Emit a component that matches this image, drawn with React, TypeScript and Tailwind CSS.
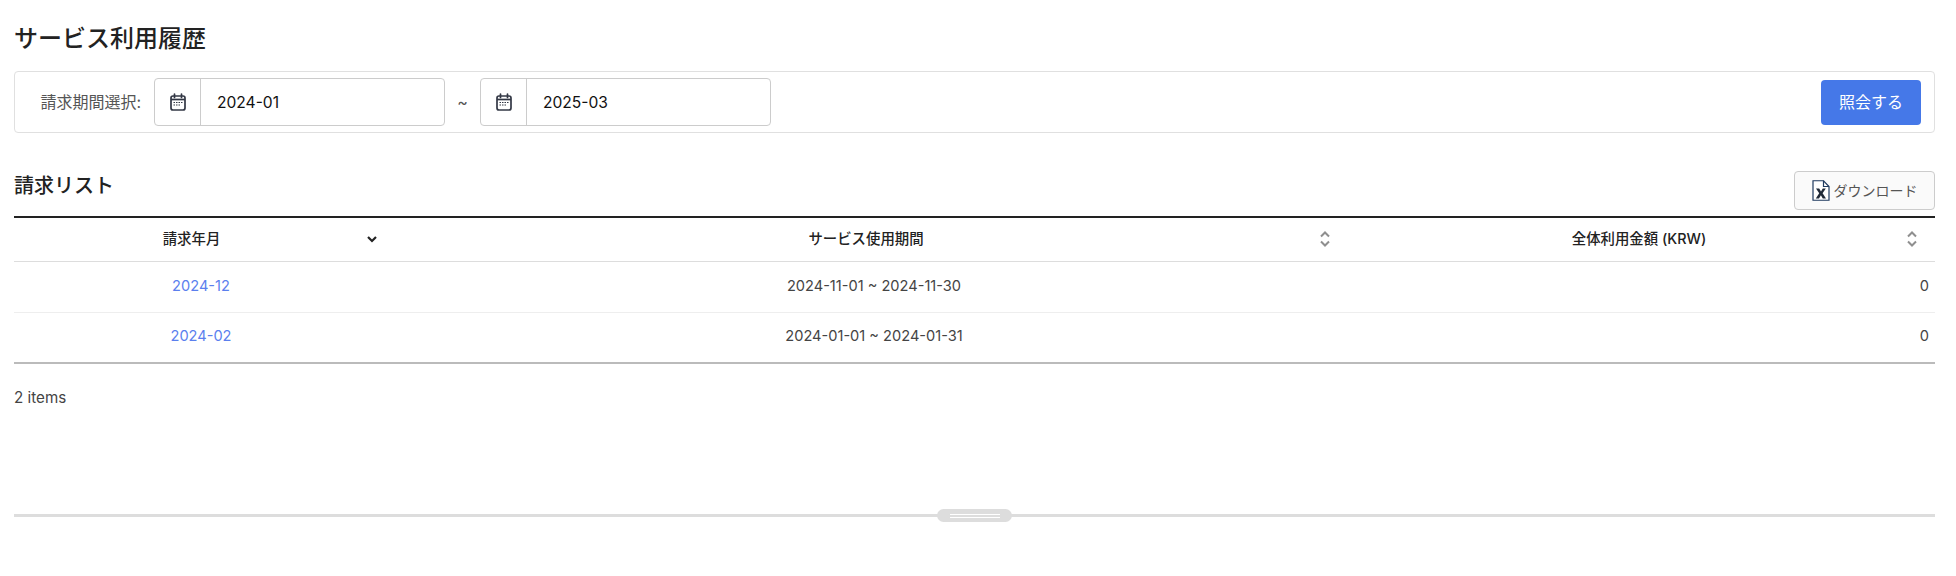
import React from "react";

function CalendarIcon() {
  return (
    <svg width="16" height="18" viewBox="0 0 16 18" fill="none" className="text-[#333845]">
      <rect x="1" y="3" width="14" height="14" rx="2" stroke="currentColor" strokeWidth="1.7" />
      <path d="M1 6.500h14" stroke="currentColor" strokeWidth="1.700" />
      <path d="M4.500 1v3.500M11.500 1v3.500" stroke="currentColor" strokeWidth="1.700" strokeLinecap="round" />
      <path d="M3.500 9.500h1.500M6 9.500h1.500M8.500 9.500h1.500M11 9.500h1.500M3.500 12h1.500M6 12h1.500M8.500 12h1.500" stroke="currentColor" strokeWidth="1.200" />
    </svg>
  );
}

function ExcelIcon() {
  return (
    <svg width="18" height="21" viewBox="0 0 18 21" fill="none">
      <path d="M1 .75h10.500L17 6.500v13.750H1z" fill="#fff" stroke="#1f3a5f" strokeWidth="1.200" />
      <path d="M11.500 .75V6.500H17" stroke="#1f3a5f" strokeWidth="1.200" fill="none" />
      <path d="M4 8.500h3.200l1.800 3 1.800-3h3l-3.200 4.700 3.400 5.300h-3.200l-1.900-3.200-1.900 3.200H3.800l3.400-5.300z" fill="#1f2937" />
    </svg>
  );
}

function SortBoth() {
  return (
    <svg width="12" height="18" viewBox="0 0 12 18" fill="none" stroke="#8f8f8f" strokeWidth="2">
      <path d="M2 6.500L6 2.500l4 4" />
      <path d="M2 11.500l4 4 4-4" />
    </svg>
  );
}

function SortDown() {
  return (
    <svg width="12" height="18" viewBox="0 0 12 18" fill="none" stroke="#222" strokeWidth="2.200">
      <path d="M2 7l4 4 4-4" />
    </svg>
  );
}

function MonthInput({ value }: { value: string }) {
  return (
    <div className="flex h-[48px] w-[291px] rounded-[4px] border border-[#cccccc] bg-white">
      <div className="flex w-[46px] items-center justify-center border-r border-[#cccccc]">
        <CalendarIcon />
      </div>
      <div className="flex flex-1 items-center pt-px pl-[16px] text-[15.6px] text-[#111]">{value}</div>
    </div>
  );
}

const rows = [
  { month: "2024-12", period: "2024-11-01 ~ 2024-11-30", amount: "0" },
  { month: "2024-02", period: "2024-01-01 ~ 2024-01-31", amount: "0" },
];

export default function App() {
  return (
    <div className="h-[576px] w-[1956px] bg-white pr-[21px] pl-[14px] font-['Inter','Noto_Sans_CJK_JP',sans-serif] text-[#222]">
      <h1 className="pt-[21px] text-[24px] leading-[36px] font-medium text-[#222]">サービス利用履歴</h1>

      {/* Search bar */}
      <div className="mt-[14px] flex h-[62px] items-center rounded-[4px] border border-[#e0e0e0] pr-[13px]">
        <span className="w-[139px] pr-[13px] text-right text-[16px] text-[#555]">請求期間選択:</span>
        <MonthInput value="2024-01" />
        <span className="w-[35px] text-center text-[16px] text-[#555]">~</span>
        <MonthInput value="2025-03" />
        <button className="ml-auto h-[45px] w-[100px] rounded-[4px] bg-[#4578e8] text-[16px] text-white">照会する</button>
      </div>

      {/* List header */}
      <div className="mt-[38px] flex h-[39px] items-start justify-between">
        <h2 className="text-[20px] leading-[30px] font-medium text-[#222]">請求リスト</h2>
        <button className="flex h-[39px] w-[141px] items-center justify-center gap-[4px] rounded-[4px] border border-[#cccccc] bg-[#fafafa] text-[14px] text-[#555]">
          <ExcelIcon />
          ダウンロード
        </button>
      </div>

      <table className="mt-[6px] w-full table-fixed border-t-2 border-b-2 border-t-[#222] border-b-[#bbbbbb] text-[14.6px]">
        <colgroup>
          <col className="w-[374px]" />
          <col className="w-[972px]" />
          <col />
        </colgroup>
        <thead>
          <tr className="h-[44px] border-b border-[#dddddd]">
            <th className="p-0 font-medium">
              <div className="flex items-center pr-[10px] pl-[15px]">
                <span className="flex-1 pr-[12px] text-center text-[14.4px]">請求年月</span>
                <SortDown />
              </div>
            </th>
            <th className="p-0 font-medium">
              <div className="flex items-center pr-[29px] pl-[25px]">
                <span className="flex-1 text-center text-[14.4px]">サービス使用期間</span>
                <SortBoth />
              </div>
            </th>
            <th className="p-0 font-medium">
              <div className="flex items-center pr-[17px] pl-[12px]">
                <span className="flex-1 text-center text-[14.4px]">全体利用金額 (KRW)</span>
                <SortBoth />
              </div>
            </th>
          </tr>
        </thead>
        <tbody>
          {rows.map((row, i) => (
            <tr key={row.month} className={i === 0 ? "h-[51px] border-b border-[#eeeeee]" : "h-[51px]"}>
              <td className="p-0 text-center text-[#5b7fee]">{row.month}</td>
              <td className="p-0 text-center text-[#444]">{row.period}</td>
              <td className="p-0 pr-[6px] text-right text-[#444]">{row.amount}</td>
            </tr>
          ))}
        </tbody>
      </table>

      <p className="mt-[24px] text-[15.2px] leading-[20px] text-[#444]">2 items</p>

      {/* Resize handle */}
      <div className="relative mt-[106px] h-[3px] bg-[#dddddd]">
        <div className="absolute top-[-5px] left-[923px] flex h-[13px] w-[75px] flex-col items-center justify-center gap-[2px] rounded-full bg-[#dddddd]">
          <span className="h-px w-[50px] bg-white" />
          <span className="h-px w-[50px] bg-white" />
        </div>
      </div>
    </div>
  );
}
